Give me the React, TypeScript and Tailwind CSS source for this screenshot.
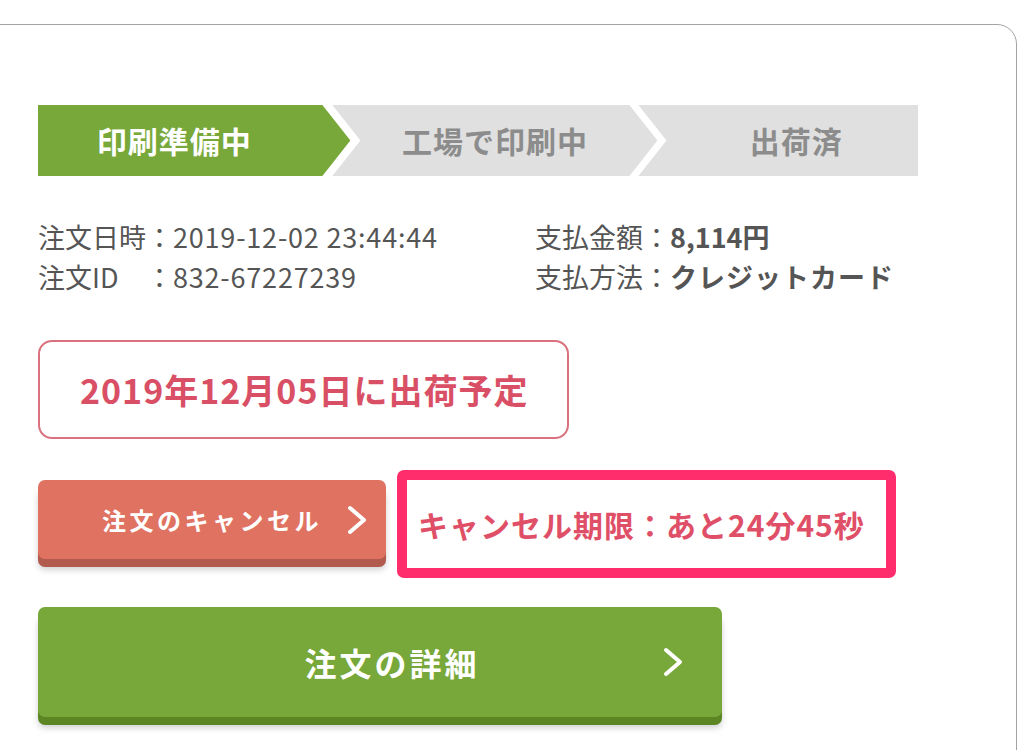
import { ReactNode } from 'react';

const font = "font-['Noto_Sans_CJK_JP','Noto_Sans',sans-serif]";

function Chevron({ className }: { className: string }) {
  return (
    <svg viewBox="0 0 22 30" fill="none" className={className}>
      <path d="M4 3 L18 15 L4 27" stroke="white" strokeWidth="4" strokeLinecap="round" strokeLinejoin="round" />
    </svg>
  );
}

function Step({ children, className, clip }: { children: ReactNode; className: string; clip: string }) {
  return (
    <div className={`h-[71px] flex items-center justify-center text-[30px] font-bold tracking-[1px] ${className}`} style={{ clipPath: clip }}>
      {children}
    </div>
  );
}

export default function App() {
  return (
    <div className={`min-h-[750px] bg-white pt-[24px] overflow-hidden ${font}`}>
      <div className="ml-[-20px] mr-[7px] min-h-[760px] border border-[#a3a3a3] rounded-tr-[20px] pl-[57px] pt-[80px]">
        {/* stepper */}
        <div className="flex w-[880px]">
          <Step className="w-[314px] bg-[#78a83a] text-white pr-[40px]" clip="polygon(0 0, calc(100% - 28px) 0, 100% 50%, calc(100% - 28px) 100%, 0 100%)">
            印刷準備中
          </Step>
          <Step className="w-[327px] ml-[-18px] bg-[#e0e0e0] text-[#8c8c8c]" clip="polygon(0 0, calc(100% - 28px) 0, 100% 50%, calc(100% - 28px) 100%, 0 100%, 28px 50%)">
            工場で印刷中
          </Step>
          <Step className="w-[281px] ml-[-19px] bg-[#e0e0e0] text-[#8c8c8c] pl-[36px]" clip="polygon(0 0, 100% 0, 100% 100%, 0 100%, 28px 50%)">
            出荷済
          </Step>
        </div>

        {/* order info */}
        <div className="flex mt-[41px] text-[27px] leading-[40px] text-[#555]">
          <div className="w-[497px]">
            <div>注文日時：<span className="tracking-[0.8px]">2019-12-02 23:44:44</span></div>
            <div><span className="inline-block w-[108px]">注文ID</span>：<span className="tracking-[0.8px]">832-67227239</span></div>
          </div>
          <div>
            <div>支払金額：<span className="font-bold">8,114円</span></div>
            <div>支払方法：<span className="font-bold tracking-[1px]">クレジットカード</span></div>
          </div>
        </div>

        {/* shipping date */}
        <div className="mt-[43px] w-[531px] h-[99px] border-2 border-[#d9727e] rounded-[14px] flex items-center pl-[40px] text-[34px] font-bold tracking-[1px] text-[#d94f65]">
          2019年12月05日に出荷予定
        </div>

        {/* cancel row */}
        <div className="flex items-start mt-[31px]">
          <button className="mt-[10px] w-[348px] h-[79px] rounded-[7px] bg-[#e07261] shadow-[0_8px_0_#b35a4e,0_11px_6px_rgba(0,0,0,0.18)] flex items-center justify-end pr-[18px] gap-[24px] text-white text-[24px] font-bold tracking-[3.5px]">
            <span>注文のキャンセル</span>
            <Chevron className="w-[22px] h-[30px]" />
          </button>
          <div className="ml-[11px] w-[499px] h-[108px] border-[10px] border-[#ff2d6b] rounded-[7px] flex items-center pl-[11px] text-[30px] font-bold text-[#df4f68] tracking-[1px]">
            キャンセル期限：あと24分45秒
          </div>
        </div>

        {/* details */}
        <button className="mt-[29px] w-[684px] h-[110px] rounded-[7px] bg-[#78a83a] shadow-[0_8px_0_#5c8524,0_11px_6px_rgba(0,0,0,0.18)] flex items-center pl-[84px] pr-[38px] text-white text-[32px] font-bold tracking-[3px]">
          <span className="flex-1 text-center">注文の詳細</span>
          <Chevron className="w-[22px] h-[30px]" />
        </button>
      </div>
    </div>
  );
}
